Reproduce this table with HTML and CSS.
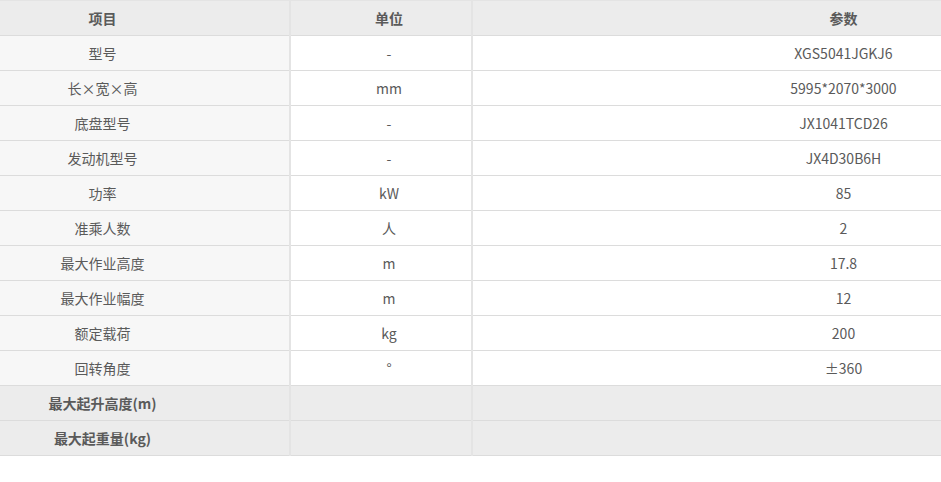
FILE: index.html
```html
<!DOCTYPE html>
<html lang="zh-CN">
<head>
  <meta charset="UTF-8">
  <title>参数表</title>
  <link rel="stylesheet" href="styles.css">
</head>
<body>
  <div class="wrap">
    <table class="spec">
      <colgroup>
        <col class="c-name">
        <col class="c-unit">
        <col class="c-val">
      </colgroup>
      <thead>
        <tr><th>项目</th><th>单位</th><th>参数</th></tr>
      </thead>
      <tbody>
        <tr><td>型号</td><td>-</td><td>XGS5041JGKJ6</td></tr>
        <tr><td>长×宽×高</td><td>mm</td><td>5995*2070*3000</td></tr>
        <tr><td>底盘型号</td><td>-</td><td>JX1041TCD26</td></tr>
        <tr><td>发动机型号</td><td>-</td><td>JX4D30B6H</td></tr>
        <tr><td>功率</td><td>kW</td><td>85</td></tr>
        <tr><td>准乘人数</td><td>人</td><td>2</td></tr>
        <tr><td>最大作业高度</td><td>m</td><td>17.8</td></tr>
        <tr><td>最大作业幅度</td><td>m</td><td>12</td></tr>
        <tr><td>额定载荷</td><td>kg</td><td>200</td></tr>
        <tr><td>回转角度</td><td>°</td><td>±360</td></tr>
        <tr class="group"><td>最大起升高度(m)</td><td></td><td></td></tr>
        <tr class="group"><td>最大起重量(kg)</td><td></td><td></td></tr>
      </tbody>
    </table>
  </div>
</body>
</html>
```

FILE: styles.css
```css
body {
  margin: 0;
  font-family: "Noto Sans CJK SC", "Open Sans", sans-serif;
  background: #fff;
}
.wrap {
  width: 941px;
  overflow: hidden;
}
.spec {
  width: 1214px;
  border-collapse: collapse;
  table-layout: fixed;
  font-size: 14px;
  color: #5a5a5a;
}
.c-name { width: 290px; }
.c-unit { width: 182px; }
.spec th,
.spec td {
  height: 34px;
  padding: 0;
  text-align: center;
  vertical-align: middle;
  border-bottom: 1px solid #dcdcdc;
  border-left: 2px solid #e4e4e4;
  line-height: 20px;
}
.spec th:first-child,
.spec td:first-child {
  border-left: none;
  padding-right: 84px;
}
.spec th:nth-child(2),
.spec td:nth-child(2) {
  padding-left: 16px;
}
.spec th {
  background: #ececec;
  font-weight: bold;
  border-top: 1px solid #e4e4e4;
}
.spec td:first-child {
  background: #f7f7f7;
}
.spec tr.group td {
  background: #ececec;
  font-weight: bold;
}
```
